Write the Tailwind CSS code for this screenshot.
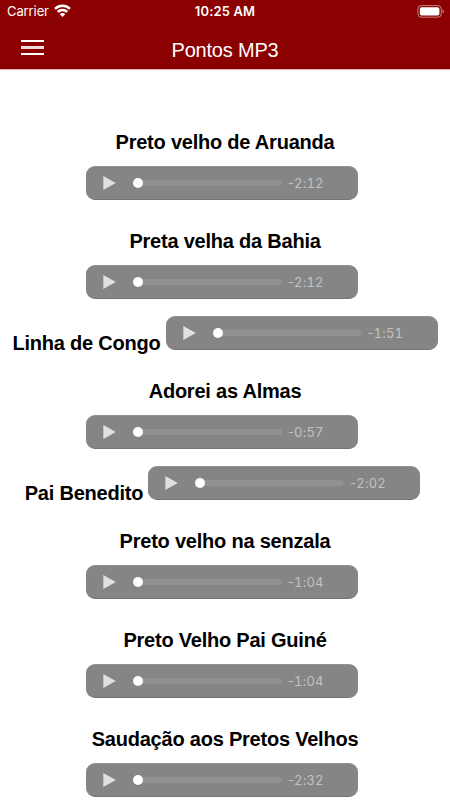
<!DOCTYPE html>
<html lang="pt-BR">
  <head>
    <meta charset="UTF-8" />
    <meta name="viewport" content="width=device-width, initial-scale=1.0" />
    <title>Pontos MP3</title>
    <script src="https://cdn.jsdelivr.net/npm/@tailwindcss/browser@4"></script>
  </head>
  <body class="bg-white h-[800px] overflow-hidden font-['Liberation_Sans',Arial,sans-serif]">

    <!-- Header -->
    <header class="h-[70px] bg-[#8b0000] text-white border-b border-[#d9b3b3]">
      <!-- Status bar -->
      <div class="grid grid-cols-3 items-center h-[23px] pl-[7px] pr-[5px] font-[Inter,sans-serif]">
        <div class="flex items-center gap-[5px]">
          <span class="text-[13px] leading-[23px] tracking-[-0.1px]">Carrier</span>
          <svg class="w-[17px] h-[13px] -mt-[2px]" viewBox="0 0 17 13" fill="none" stroke="#fff" stroke-width="2.5">
            <path d="M1 4.8a10.8 10.8 0 0 1 15 0" />
            <path d="M3.7 7.9a6.8 6.8 0 0 1 9.6 0" />
            <path d="M8.5 13L5.7 10.1a3.9 3.9 0 0 1 5.6 0z" fill="#fff" stroke="none" />
          </svg>
        </div>
        <span class="-ml-[2px] text-center text-[13px] leading-[23px] font-semibold tracking-[0.15px]">10:25 AM</span>
        <svg class="justify-self-end w-[28px] h-[13px] -mt-px" viewBox="0 0 28 13">
          <rect x="0.9" y="0.6" width="23.4" height="11.6" rx="3.4" fill="none" stroke="#fff" stroke-opacity=".5" />
          <rect x="2.8" y="2.3" width="19.6" height="8.2" rx="1.8" fill="#fff" />
          <path d="M25.6 4.5v4c1.8-.7 1.8-3.3 0-4z" fill="#fff" fill-opacity=".55" />
        </svg>
      </div>

      <div class="grid grid-cols-[21px_1fr_21px] h-[46px] px-[21px]">
        <button aria-label="Menu" class="w-[23px] h-[15px] mt-[17px] flex flex-col justify-between">
          <span class="block w-full h-[2px] bg-white"></span>
          <span class="block w-full h-[3px] bg-white/85"></span>
          <span class="block w-full h-[2px] bg-white"></span>
        </button>
        <h1 class="text-center text-[20px] leading-[54px] tracking-[-0.2px]">Pontos MP3</h1>
      </div>
    </header>

    <main id="list" class="pt-[48px]"></main>

    <script>
      const pontos = [
        { title: "Preto velho de Aruanda", min: "2", sec: "12" },
        { title: "Preta velha da Bahia", min: "2", sec: "12" },
        { title: "Linha de Congo", min: "1", sec: "51", inline: true, space: "mr-0" },
        { title: "Adorei as Almas", min: "0", sec: "57" },
        { title: "Pai Benedito", min: "2", sec: "02", inline: true, space: "mr-[5px]" },
        { title: "Preto velho na senzala", min: "1", sec: "04" },
        { title: "Preto Velho Pai Guiné", min: "1", sec: "04" },
        { title: "Saudação aos Pretos Velhos", min: "2", sec: "32" },
      ];

      const list = document.getElementById("list");

      pontos.forEach(ponto => {
        const row = document.createElement("div");
        row.className = ponto.inline
          ? "flex justify-center items-start gap-[5px] h-[51px]"
          : "flex flex-col items-center h-[99px]";

        row.innerHTML = `
          <h2 class="${ponto.inline ? "leading-[54px]" : "leading-[48px]"} text-[20px] tracking-[-0.22px] font-bold text-black whitespace-nowrap">${ponto.title}</h2>
          <div class="${ponto.inline ? ponto.space : "mr-[6px]"} shrink-0 flex items-center w-[272px] h-[34px] pl-[17px] rounded-[9px] bg-[#858585] border-y border-t-[#929292] border-b-[#747474]">
            <svg class="w-[13px] h-[16px]" viewBox="0 0 13 16"><path d="M0.3 1v14L12.8 8z" fill="#e0e0e0" /></svg>
            <div class="ml-[17px] flex items-center w-[149px]">
              <span class="relative w-[10px] h-[10px] shrink-0 rounded-full bg-white"></span>
              <span class="-ml-[2px] flex-1 h-[6px] rounded-r-full bg-[#919191]"></span>
            </div>
            <span class="ml-[6px] text-[13px] leading-[32px] tracking-[0.1px] text-[#c2c2c2] font-[Inter,sans-serif]">-<span class="tabular-nums">${ponto.min}</span>:<span class="tabular-nums">${ponto.sec}</span></span>
          </div>
        `;

        list.appendChild(row);
      });
    </script>

  </body>
</html>
